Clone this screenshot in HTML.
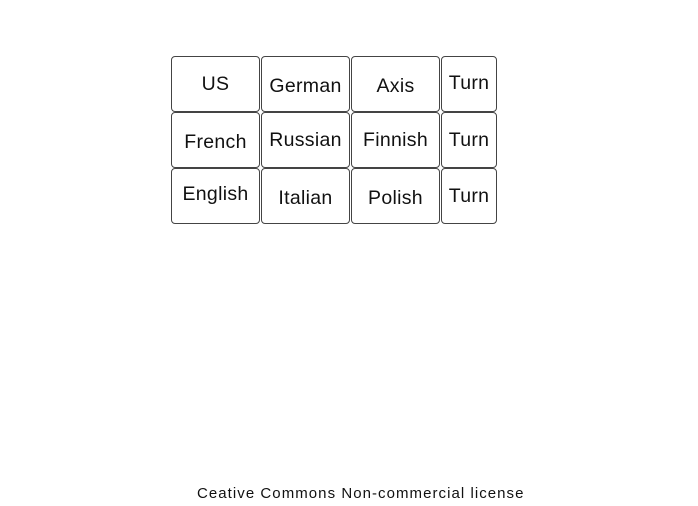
<!DOCTYPE html>
<html><head><style>
body{margin:0;width:698px;height:506px;background:#fff;position:relative;font-family:"Liberation Sans",sans-serif;color:#111;overflow:hidden}
.c{position:absolute;box-sizing:border-box;border:1.5px solid #444;border-radius:4px;background:#fff}
.t{position:absolute;left:0;right:0;text-align:center;font-size:19.5px;line-height:20px;letter-spacing:0.3px}
.f{position:absolute;left:197px;top:485px;font-size:15px;line-height:18px;letter-spacing:1.05px;white-space:nowrap;color:#111}
</style></head><body>
<div class="c" style="left:171px;top:56px;width:89px;height:56px"><div class="t" style="top:17px">US</div></div>
<div class="c" style="left:261px;top:56px;width:89px;height:56px"><div class="t" style="top:19px">German</div></div>
<div class="c" style="left:351px;top:56px;width:89px;height:56px"><div class="t" style="top:19px">Axis</div></div>
<div class="c" style="left:441px;top:56px;width:56px;height:56px"><div class="t" style="top:16px">Turn</div></div>
<div class="c" style="left:171px;top:112px;width:89px;height:56px"><div class="t" style="top:19px">French</div></div>
<div class="c" style="left:261px;top:112px;width:89px;height:56px"><div class="t" style="top:17px">Russian</div></div>
<div class="c" style="left:351px;top:112px;width:89px;height:56px"><div class="t" style="top:17px">Finnish</div></div>
<div class="c" style="left:441px;top:112px;width:56px;height:56px"><div class="t" style="top:17px">Turn</div></div>
<div class="c" style="left:171px;top:168px;width:89px;height:56px"><div class="t" style="top:15px">English</div></div>
<div class="c" style="left:261px;top:168px;width:89px;height:56px"><div class="t" style="top:19px">Italian</div></div>
<div class="c" style="left:351px;top:168px;width:89px;height:56px"><div class="t" style="top:19px">Polish</div></div>
<div class="c" style="left:441px;top:168px;width:56px;height:56px"><div class="t" style="top:17px">Turn</div></div>
<div class="f">Ceative Commons Non-commercial license</div>
</body></html>
